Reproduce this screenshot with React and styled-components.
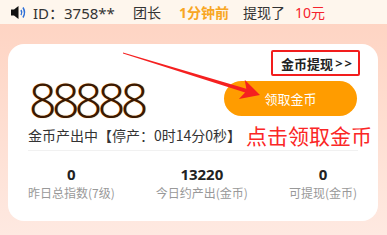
import React from 'react'
import styled, { createGlobalStyle } from 'styled-components'

const GlobalStyle = createGlobalStyle`
  html, body { margin: 0; padding: 0; }
  body {
    width: 387px;
    height: 235px;
    overflow: hidden;
    font-family: "Noto Sans", "Noto Sans CJK SC", sans-serif;
  }
`

const Page = styled.div`
  position: relative;
  width: 387px;
  height: 235px;
  background: linear-gradient(180deg, #fed2c0 0%, #fee9e1 100%);
  overflow: hidden;
`

const Ticker = styled.div`
  height: 24px;
  display: flex;
  align-items: center;
  padding-left: 10px;
  background: #fef6ed;
  font-size: 14px;
  color: #333;
  white-space: nowrap;
`

const Seg = styled.span`
  margin-left: ${({ $ml }) => $ml || 0}px;
  color: ${({ $color }) => $color || '#333'};
  font-weight: ${({ $bold }) => ($bold ? 700 : 400)};
  font-size: ${({ $size }) => $size || 14}px;
`

const Card = styled.div`
  margin: 20px 9px 0 8px;
  height: 177px;
  box-sizing: border-box;
  background: #fff;
  border-radius: 16px;
  padding: 6px 18px 0 20px;
  display: flex;
  flex-direction: column;
`

const LinkBox = styled.div`
  align-self: flex-end;
  height: 26px;
  box-sizing: border-box;
  border: 2px solid #f21d1d;
  border-radius: 2px;
  padding: 0 4px 0 8px;
  display: flex;
  align-items: center;
  font-size: 13px;
  font-weight: 700;
  color: #222;
  span { margin-left: 2px; letter-spacing: 2px; }
`

const MainRow = styled.div`
  display: flex;
  justify-content: space-between;
  align-items: flex-start;
  margin-top: 4px;
  padding-right: 3px;
`

const Amount = styled.div`
  font-family: "Noto Sans", sans-serif;
  font-size: 48px;
  font-weight: 300;
  line-height: 40px;
  height: 40px;
  letter-spacing: -4.5px;
  color: #3b1800;
  text-shadow: 0 0 1px rgba(240, 138, 26, 0.7);
  margin-left: 1px;
`

const ClaimButton = styled.button`
  margin-top: 1px;
  width: 133px;
  height: 35px;
  border: none;
  border-radius: 18px;
  background: #ff9c00;
  color: #fff;
  font-family: "Noto Sans CJK SC", sans-serif;
  font-size: 13px;
  cursor: pointer;
`

const InfoRow = styled.div`
  display: flex;
  align-items: center;
  height: 30px;
`

const Status = styled.div`
  font-family: "Noto Sans CJK SC", sans-serif;
  font-size: 14px;
  color: #333;
  white-space: nowrap;
`

const Callout = styled.div`
  margin-left: 5px;
  font-family: "Noto Sans CJK SC", sans-serif;
  font-size: 21px;
  color: #fb2626;
  white-space: nowrap;
`

const Divider = styled.div`
  height: 1px;
  background: #f1f1f1;
  margin: 0 2px 0 0;
`

const Stats = styled.div`
  display: flex;
  justify-content: space-between;
  padding: 14px 3px 0 0;
`

const Stat = styled.div`
  display: flex;
  flex-direction: column;
  align-items: center;
`

const StatValue = styled.div`
  font-size: 15px;
  font-weight: 700;
  color: #222;
  line-height: 18px;
`

const StatLabel = styled.div`
  font-family: "Noto Sans CJK SC", sans-serif;
  font-size: 12px;
  color: #999;
  line-height: 18px;
  margin-top: 1px;
`

const Overlay = styled.svg`
  position: absolute;
  left: 0;
  top: 0;
  pointer-events: none;
`

function Speaker() {
  return (
    <svg width="17" height="15" viewBox="0 0 17 15" style={{ marginRight: 6 }}>
      <rect x="1" y="4.5" width="3" height="6" fill="#111" />
      <polygon points="4,4.5 8.5,1 8.5,14 4,10.5" fill="#111" />
      <path d="M11 5 Q12.6 7.5 11 10" stroke="#2d6fd8" strokeWidth="1.5" fill="none" />
      <path d="M13 2.5 Q16 7.5 13 12.5" stroke="#2d6fd8" strokeWidth="1.5" fill="none" />
    </svg>
  )
}

const stats = [
  { value: '0', label: '昨日总指数(7级)' },
  { value: '13220', label: '今日约产出(金币)' },
  { value: '0', label: '可提现(金币)' },
]

export default function App() {
  return (
    <>
      <GlobalStyle />
      <Page>
        <Ticker>
          <Speaker />
          <Seg $size={15}>ID：3758**</Seg>
          <Seg $ml={18}>团长</Seg>
          <Seg $ml={18} $color="#f8a623" $bold>1分钟前</Seg>
          <Seg $ml={14}>提现了</Seg>
          <Seg $ml={10} $color="#f5222d">10元</Seg>
        </Ticker>
        <Card>
          <LinkBox>金币提现<span>&gt;&gt;</span></LinkBox>
          <MainRow>
            <Amount>88888</Amount>
            <ClaimButton>领取金币</ClaimButton>
          </MainRow>
          <InfoRow>
            <Status>金币产出中【停产：0时14分0秒】</Status>
            <Callout>点击领取金币</Callout>
          </InfoRow>
          <Divider />
          <Stats>
            {stats.map((s) => (
              <Stat key={s.label}>
                <StatValue>{s.value}</StatValue>
                <StatLabel>{s.label}</StatLabel>
              </Stat>
            ))}
          </Stats>
        </Card>
        <Overlay width="387" height="235" viewBox="0 0 387 235">
          <polygon
            points="123,52.6 246.3,88.7 244.7,79.8 260,95 238.9,99 245.1,92.5 123,53.4"
            fill="#f52020"
          />
        </Overlay>
      </Page>
    </>
  )
}
